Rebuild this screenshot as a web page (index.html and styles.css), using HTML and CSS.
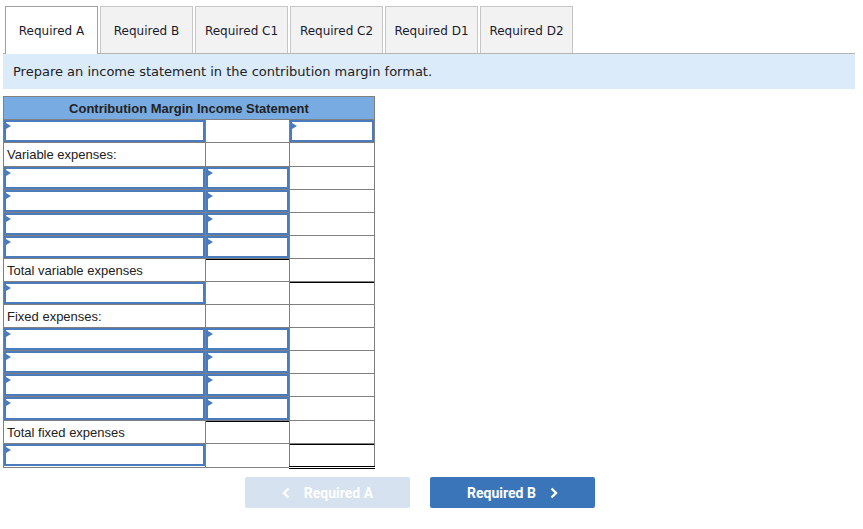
FILE: index.html
```html
<!DOCTYPE html>
<html>
<head>
<meta charset="utf-8">
<link rel="stylesheet" href="styles.css">
</head>
<body>
<div class="page">
  <div class="tabs">
    <div class="tab active">Required A</div>
    <div class="tab">Required B</div>
    <div class="tab">Required C1</div>
    <div class="tab">Required C2</div>
    <div class="tab">Required D1</div>
    <div class="tab">Required D2</div>
  </div>
  <div class="instr">Prepare an income statement in the contribution margin format.</div>

  <table class="stmt">
    <colgroup><col class="c1"><col class="c2"><col class="c3"></colgroup>
    <tr><th colspan="3">Contribution Margin Income Statement</th></tr>
    <tr><td class="in"><div class="inp"></div></td><td></td><td class="in"><div class="inp"></div></td></tr>
    <tr class="tall"><td class="lbl">Variable expenses:</td><td></td><td></td></tr>
    <tr><td class="in"><div class="inp"></div></td><td class="in"><div class="inp"></div></td><td></td></tr>
    <tr><td class="in"><div class="inp"></div></td><td class="in"><div class="inp"></div></td><td></td></tr>
    <tr><td class="in"><div class="inp"></div></td><td class="in"><div class="inp"></div></td><td></td></tr>
    <tr><td class="in"><div class="inp"></div></td><td class="in"><div class="inp"></div></td><td></td></tr>
    <tr><td class="lbl">Total variable expenses</td><td class="tot"></td><td></td></tr>
    <tr><td class="in"><div class="inp"></div></td><td></td><td class="tot"></td></tr>
    <tr><td class="lbl">Fixed expenses:</td><td></td><td></td></tr>
    <tr><td class="in"><div class="inp"></div></td><td class="in"><div class="inp"></div></td><td></td></tr>
    <tr><td class="in"><div class="inp"></div></td><td class="in"><div class="inp"></div></td><td></td></tr>
    <tr><td class="in"><div class="inp"></div></td><td class="in"><div class="inp"></div></td><td></td></tr>
    <tr class="tall"><td class="in"><div class="inp"></div></td><td class="in"><div class="inp"></div></td><td></td></tr>
    <tr><td class="lbl">Total fixed expenses</td><td class="tot"></td><td></td></tr>
    <tr><td class="in"><div class="inp"></div></td><td></td><td class="tot dbl"></td></tr>
  </table>

  <div class="nav">
    <button class="btn prev" disabled><svg class="chev left" width="8" height="12" viewBox="0 0 8 12"><path d="M6.5 1.5 L2 6 L6.5 10.5" fill="none" stroke="#ffffff" stroke-width="2.4"/></svg>Required A</button>
    <button class="btn next">Required B<svg class="chev right" width="8" height="12" viewBox="0 0 8 12"><path d="M1.5 1.5 L6 6 L1.5 10.5" fill="none" stroke="#ffffff" stroke-width="2.4"/></svg></button>
  </div>
</div>
</body>
</html>
```
FILE: styles.css
```css
html, body {
  margin: 0;
  padding: 0;
  background: #ffffff;
}

.page {
  padding: 6px 8px 0 3px;
  font-family: "DejaVu Sans", Verdana, sans-serif;
  color: #222;
}

.tabs {
  display: flex;
  gap: 2px;
  padding-left: 2px;
  border-bottom: 1px solid #b4b4b4;
  height: 47px;
}

.tab {
  box-sizing: border-box;
  width: 93px;
  height: 47px;
  background: #f2f2f2;
  border: 1px solid #c6c6c6;
  border-bottom: none;
  display: flex;
  align-items: center;
  justify-content: center;
  font-size: 12px;
  color: #1a1a2e;
  padding-top: 1px;
}

.tab.active {
  background: #ffffff;
  border-color: #a0a0a0;
  height: 48px;
  position: relative;
  z-index: 1;
}

.instr {
  background: #dcebf9;
  height: 35px;
  display: flex;
  align-items: center;
  padding-left: 10px;
  font-size: 13px;
  color: #222;
}

.stmt {
  margin-top: 7px;
  border-collapse: collapse;
  table-layout: fixed;
  width: 371px;
  font-family: "Liberation Sans", Arial, sans-serif;
  font-size: 13px;
  border: 1px solid #808080;
}

.c1 { width: 202px; }
.c2 { width: 84px; }
.c3 { width: 85px; }

.stmt th {
  background: #78abe2;
  height: 22px;
  padding: 0;
  font-weight: bold;
  font-size: 13px;
  color: #222;
  text-align: center;
  border: 1px solid #808080;
}

.stmt td {
  height: 22px;
  padding: 0;
  border: 1px solid #808080;
  vertical-align: top;
}

.stmt tr.tall td {
  height: 23px;
}

.stmt td.lbl {
  padding-left: 3px;
  vertical-align: middle;
  color: #222;
}

.stmt td.tot {
  box-shadow: inset 0 1px 0 #000;
}

.stmt td.dbl {
  border-bottom: 3px double #000;
}

.inp {
  box-sizing: border-box;
  height: 22px;
  border: 2px solid #4a7cbd;
  position: relative;
}

.tall .inp {
  height: 23px;
}

.inp::before {
  content: "";
  position: absolute;
  top: 1px;
  left: 0;
  width: 0;
  height: 0;
  border-left: 5px solid #4a7cbd;
  border-top: 3px solid transparent;
  border-bottom: 3px solid transparent;
}

.nav {
  display: flex;
  gap: 20px;
  margin-top: 8px;
  padding-left: 242px;
}

.btn {
  width: 165px;
  height: 31px;
  border: none;
  border-radius: 2px;
  font-family: Roboto, "Liberation Sans", Arial, sans-serif;
  font-weight: bold;
  font-size: 14px;
  color: #ffffff;
  display: flex;
  align-items: center;
  justify-content: center;
  padding: 0;
}

.btn.prev {
  background: #d6e2f0;
}

.btn.next {
  background: #3a75b9;
}

.chev.left { margin-right: 14px; }
.chev.right { margin-left: 14px; }
```
